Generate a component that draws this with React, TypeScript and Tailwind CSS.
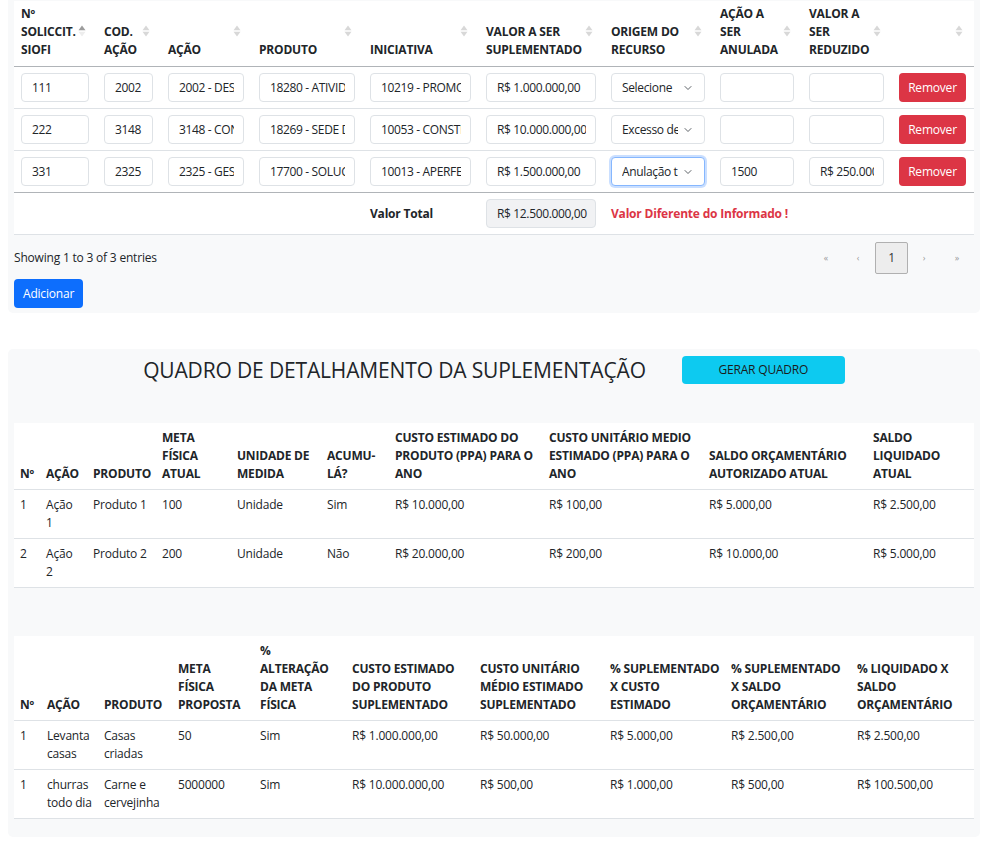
import { ChevronDown } from "lucide-react";

type Row = {
  siofi: string;
  cod: string;
  acao: string;
  produto: string;
  iniciativa: string;
  valor: string;
  origem: string;
  anulada: string;
  reduzido: string;
  focus?: boolean;
};

const rows: Row[] = [
  { siofi: "111", cod: "2002", acao: "2002 - DESENVOLVIMENTO", produto: "18280 - ATIVIDADES", iniciativa: "10219 - PROMOCAO", valor: "R$ 1.000.000,00", origem: "Selecione", anulada: "", reduzido: "" },
  { siofi: "222", cod: "3148", acao: "3148 - CONSTRUCAO", produto: "18269 - SEDE DO", iniciativa: "10053 - CONSTRUCAO", valor: "R$ 10.000.000,00", origem: "Excesso de", anulada: "", reduzido: "" },
  { siofi: "331", cod: "2325", acao: "2325 - GESTAO", produto: "17700 - SOLUCOES", iniciativa: "10013 - APERFEICOAMENTO", valor: "R$ 1.500.000,00", origem: "Anulação t", anulada: "1500", reduzido: "R$ 250.000,00", focus: true },
];

const widths1 = [83, 64, 91, 111, 116, 125, 109, 89, 90, 82];

const headers1 = [
  ["Nº", "SOLICCIT.", "SIOFI"],
  ["COD.", "AÇÃO"],
  ["AÇÃO"],
  ["PRODUTO"],
  ["INICIATIVA"],
  ["VALOR A SER", "SUPLEMENTADO"],
  ["ORIGEM DO", "RECURSO"],
  ["AÇÃO A", "SER", "ANULADA"],
  ["VALOR A", "SER", "REDUZIDO"],
  [],
];

const widths2 = [26, 47, 69, 75, 90, 68, 154, 160, 164, 107];
const headers2 = [
  ["Nº"],
  ["AÇÃO"],
  ["PRODUTO"],
  ["META", "FÍSICA", "ATUAL"],
  ["UNIDADE DE", "MEDIDA"],
  ["ACUMU-", "LÁ?"],
  ["CUSTO ESTIMADO DO", "PRODUTO (PPA) PARA O", "ANO"],
  ["CUSTO UNITÁRIO MEDIO", "ESTIMADO (PPA) PARA O", "ANO"],
  ["SALDO ORÇAMENTÁRIO", "AUTORIZADO ATUAL"],
  ["SALDO", "LIQUIDADO", "ATUAL"],
];
const body2 = [
  [["1"], ["Ação", "1"], ["Produto 1"], ["100"], ["Unidade"], ["Sim"], ["R$ 10.000,00"], ["R$ 100,00"], ["R$ 5.000,00"], ["R$ 2.500,00"]],
  [["2"], ["Ação", "2"], ["Produto 2"], ["200"], ["Unidade"], ["Não"], ["R$ 20.000,00"], ["R$ 200,00"], ["R$ 10.000,00"], ["R$ 5.000,00"]],
];

const widths3 = [27, 57, 74, 82, 92, 128, 130, 121, 126, 123];
const headers3 = [
  ["Nº"],
  ["AÇÃO"],
  ["PRODUTO"],
  ["META", "FÍSICA", "PROPOSTA"],
  ["%", "ALTERAÇÃO", "DA META", "FÍSICA"],
  ["CUSTO ESTIMADO", "DO PRODUTO", "SUPLEMENTADO"],
  ["CUSTO UNITÁRIO", "MÉDIO ESTIMADO", "SUPLEMENTADO"],
  ["% SUPLEMENTADO", "X CUSTO", "ESTIMADO"],
  ["% SUPLEMENTADO", "X SALDO", "ORÇAMENTÁRIO"],
  ["% LIQUIDADO X", "SALDO", "ORÇAMENTÁRIO"],
];
const body3 = [
  [["1"], ["Levanta", "casas"], ["Casas", "criadas"], ["50"], ["Sim"], ["R$ 1.000.000,00"], ["R$ 50.000,00"], ["R$ 5.000,00"], ["R$ 2.500,00"], ["R$ 2.500,00"]],
  [["1"], ["churras", "todo dia"], ["Carne e", "cervejinha"], ["5000000"], ["Sim"], ["R$ 10.000.000,00"], ["R$ 500,00"], ["R$ 1.000,00"], ["R$ 500,00"], ["R$ 100.500,00"]],
];

function Lines({ lines }: { lines: string[] }) {
  return (
    <>
      {lines.map((l, i) => (
        <span key={i} className="block whitespace-nowrap">
          {l}
        </span>
      ))}
    </>
  );
}

// datatables style sort arrows, first column sorted ascending
function SortIcon({ active }: { active?: boolean }) {
  return (
    <svg width="8" height="12" viewBox="0 0 8 12" className="absolute right-[11px] top-[24px]">
      <polygon points="4,0.5 7.5,5.3 0.5,5.3" fill={active ? "#9c9c9c" : "#d8d8d8"} />
      <polygon points="0.5,6.7 7.5,6.7 4,11.5" fill={active ? "#ededed" : "#d8d8d8"} />
    </svg>
  );
}

function Field({ value, disabled }: { value: string; disabled?: boolean }) {
  return (
    <input
      readOnly
      value={value}
      className={`block h-[29px] w-full rounded-[4px] border border-[#dee2e6] pl-[10px] text-[12px] tracking-[-0.35px] text-[#212529] outline-none ${
        disabled ? "bg-[#f1f2f4] pr-[3px]" : "bg-white pr-[9px]"
      }`}
    />
  );
}

function Select({ value, focus }: { value: string; focus?: boolean }) {
  return (
    <div
      className={`flex h-[29px] w-full items-center rounded-[4px] border bg-white pl-[10px] pr-[10px] text-[12px] tracking-[-0.35px] ${
        focus ? "border-[#86b7fe] shadow-[0_0_0_2px_rgba(13,110,253,0.22)]" : "border-[#dee2e6]"
      }`}
    >
      <span className="min-w-0 flex-1 overflow-hidden whitespace-nowrap">{value}</span>
      <ChevronDown size={12} strokeWidth={1.6} className="ml-[4px] shrink-0 text-[#343a40]" />
    </div>
  );
}

function DataTable({ widths, headers, body }: { widths: number[]; headers: string[][]; body: string[][][] }) {
  return (
    <table className="w-[960px] table-fixed border-collapse bg-white text-[12px] leading-[18px]">
      <colgroup>
        {widths.map((w, i) => (
          <col key={i} style={{ width: w }} />
        ))}
      </colgroup>
      <thead>
        <tr className="border-b border-[#dee2e6]">
          {headers.map((h, i) => (
            <th key={i} className="px-[6px] py-[6px] text-left align-bottom font-bold">
              <Lines lines={h} />
            </th>
          ))}
        </tr>
      </thead>
      <tbody>
        {body.map((r, ri) => (
          <tr key={ri} className="border-b border-[#dee2e6]">
            {r.map((c, ci) => (
              <td key={ci} className="h-[49px] px-[6px] py-[6px] align-top">
                <Lines lines={c} />
              </td>
            ))}
          </tr>
        ))}
      </tbody>
    </table>
  );
}

export default function App() {
  return (
    <div className="min-h-[850px] bg-white font-['Open_Sans',sans-serif] tracking-[-0.2px] text-[#212529]">
      {/* Lançamentos */}
      <div className="ml-[8px] w-[972px] rounded-b-[5px] bg-[#f8f9fa] px-[6px] pb-[5px] pt-[1px]">
        <table className="w-[960px] table-fixed border-collapse bg-white text-[12px] leading-[18px]">
          <colgroup>
            {widths1.map((w, i) => (
              <col key={i} style={{ width: w }} />
            ))}
          </colgroup>
          <thead>
            <tr className="border-b border-[#b0b4b8]">
              {headers1.map((h, i) => (
                <th key={i} className="relative h-[65px] pb-[7px] pl-[7px] pr-[8px] pt-[4px] text-left align-bottom font-bold">
                  <Lines lines={h} />
                  <SortIcon active={i === 0} />
                </th>
              ))}
            </tr>
          </thead>
          <tbody>
            {rows.map((r, i) => (
              <tr key={i} className={i === rows.length - 1 ? "border-b border-[#b0b4b8]" : "border-b border-[#dee2e6]"}>
                <td className="pl-[7px] pr-[8px] py-[6px]"><Field value={r.siofi} /></td>
                <td className="pl-[7px] pr-[8px] py-[6px]"><Field value={r.cod} /></td>
                <td className="pl-[7px] pr-[8px] py-[6px]"><Field value={r.acao} /></td>
                <td className="pl-[7px] pr-[8px] py-[6px]"><Field value={r.produto} /></td>
                <td className="pl-[7px] pr-[8px] py-[6px]"><Field value={r.iniciativa} /></td>
                <td className="pl-[7px] pr-[8px] py-[6px]"><Field value={r.valor} /></td>
                <td className="pl-[7px] pr-[8px] py-[6px]"><Select value={r.origem} focus={r.focus} /></td>
                <td className="pl-[7px] pr-[8px] py-[6px]"><Field value={r.anulada} /></td>
                <td className="pl-[7px] pr-[8px] py-[6px]"><Field value={r.reduzido} /></td>
                <td className="pl-[7px] pr-[8px] py-[6px]">
                  <button className="h-[29px] w-full rounded-[4px] bg-[#dc3545] text-[12px] text-white">Remover</button>
                </td>
              </tr>
            ))}
            <tr className="border-b border-[#dee2e6]">
              <td colSpan={4} className="h-[41px]" />
              <td className="pl-[7px] font-bold">Valor Total</td>
              <td className="pl-[7px] pr-[8px] py-[6px]"><Field value="R$ 12.500.000,00" disabled /></td>
              <td colSpan={4} className="whitespace-nowrap pl-[7px] font-bold text-[#dc3545]">Valor Diferente do Informado !</td>
            </tr>
          </tbody>
        </table>

        <div className="mt-[7px] flex h-[32px] items-center justify-between text-[12px]">
          <span>Showing 1 to 3 of 3 entries</span>
          <div className="flex items-center text-[9px] text-[#9a9a9a]">
            <span className="w-[30px] text-center">«</span>
            <span className="w-[34px] text-center">‹</span>
            <span className="flex h-[32px] w-[33px] items-center justify-center rounded-[2px] border border-[#b0b0b0] bg-[#ededed] text-[12px] text-[#333]">1</span>
            <span className="w-[32px] text-center">›</span>
            <span className="w-[34px] text-center">»</span>
          </div>
        </div>
        <button className="mt-[5px] h-[29px] rounded-[4px] bg-[#0d6efd] px-[9px] text-[12px] text-white">Adicionar</button>
      </div>

      {/* Quadro de detalhamento */}
      <div className="ml-[8px] mt-[36px] w-[972px] rounded-[5px] bg-[#f8f9fa] px-[6px] pb-[18px] pt-[7px]">
        <div className="flex h-[28px] items-center justify-center gap-[36px]">
          <h2 className="text-[21px] font-normal leading-[28px] tracking-[-0.15px] text-[#212529]">QUADRO DE DETALHAMENTO DA SUPLEMENTAÇÃO</h2>
          <button className="h-[28px] w-[163px] rounded-[4px] bg-[#0dcaf0] text-[12px] text-[#1b1b1b]">GERAR QUADRO</button>
        </div>
        <div className="mt-[39px]">
          <DataTable widths={widths2} headers={headers2} body={body2} />
        </div>
        <div className="mt-[48px]">
          <DataTable widths={widths3} headers={headers3} body={body3} />
        </div>
      </div>
    </div>
  );
}
